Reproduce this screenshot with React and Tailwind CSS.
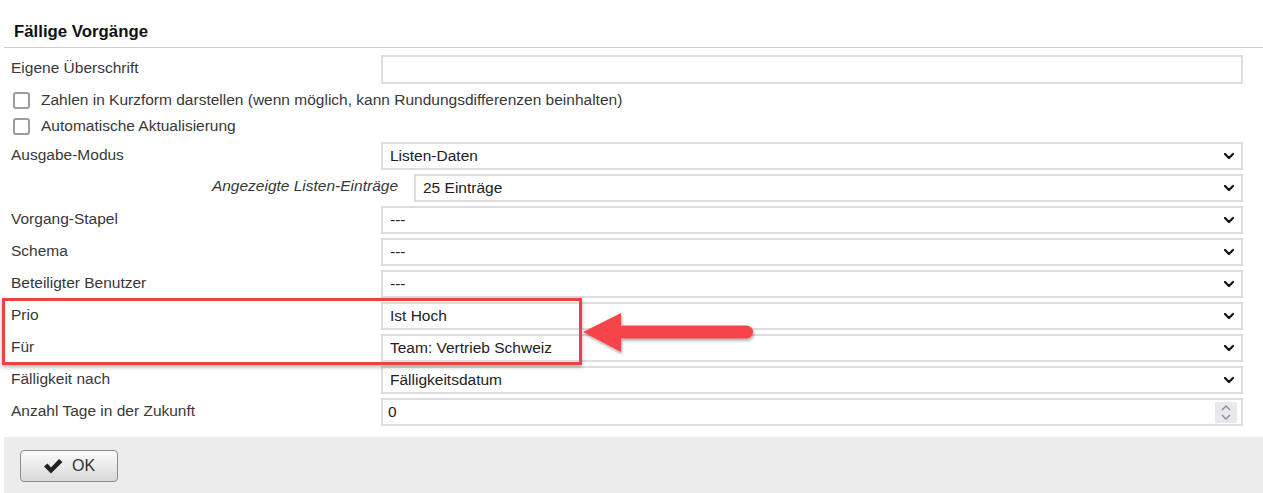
import React from "react";

const font = { fontFamily: '"Liberation Sans", Arial, sans-serif' };

function Chevron() {
  return (
    <svg width="12" height="8" viewBox="0 0 12 8" className="shrink-0">
      <polyline points="2,2 6,6 10,2" fill="none" stroke="#111" strokeWidth="2.2" strokeLinecap="round" strokeLinejoin="round" />
    </svg>
  );
}

function Select({ value }) {
  return (
    <div className="flex-1 h-[28px] border-2 border-[#dedede] bg-white flex items-center justify-between pl-[7px] pr-[6px] text-[15.5px] text-[#222]">
      <span>{value}</span>
      <Chevron />
    </div>
  );
}

function Row({ label, children }) {
  return (
    <div className="flex items-center h-[28px] mt-[4px]">
      <div className="w-[377px] shrink-0 pl-[7px] text-[15.5px] text-[#383838] -mt-[2px]">{label}</div>
      {children}
    </div>
  );
}

function Checkbox({ label }) {
  return (
    <div className="flex items-center h-[26px] pl-[9px]">
      <div className="w-[17px] h-[17px] border-2 border-[#9b9ba3] rounded-[3px] bg-white" />
      <span className="ml-[11px] text-[15.5px] text-[#383838]">{label}</span>
    </div>
  );
}

export default function App() {
  return (
    <div className="relative w-[1263px] h-[493px] bg-white overflow-hidden pl-[4px]" style={font}>
      <div className="h-[48px] flex items-end pb-[5px] border-b border-[#cfcfcf]">
        <span className="pl-[10px] text-[16.8px] leading-[20px] font-bold text-[#111]">Fällige Vorgänge</span>
      </div>

      <div className="pr-[20px]">
        <div className="flex items-center h-[29px] mt-[7px]">
          <div className="w-[377px] shrink-0 pl-[7px] text-[15.5px] text-[#383838] -mt-[3px]">Eigene Überschrift</div>
          <div className="flex-1 h-[29px] border-2 border-[#dedede] bg-white" />
        </div>

        <div className="mt-[3px]">
          <Checkbox label="Zahlen in Kurzform darstellen (wenn möglich, kann Rundungsdifferenzen beinhalten)" />
          <Checkbox label="Automatische Aktualisierung" />
        </div>

        <div className="flex items-center h-[28px] mt-[3px]">
          <div className="w-[377px] shrink-0 pl-[7px] text-[15.5px] text-[#383838] -mt-[2px]">Ausgabe-Modus</div>
          <Select value="Listen-Daten" />
        </div>

        <div className="flex items-center h-[28px] mt-[4px]">
          <div className="w-[410px] shrink-0 pr-[16px] text-right text-[15.5px] italic text-[#383838] -mt-[4px]">Angezeigte Listen-Einträge</div>
          <Select value="25 Einträge" />
        </div>

        <Row label="Vorgang-Stapel"><Select value="---" /></Row>
        <Row label="Schema"><Select value="---" /></Row>
        <Row label="Beteiligter Benutzer"><Select value="---" /></Row>
        <Row label="Prio"><Select value="Ist Hoch" /></Row>
        <Row label="Für"><Select value="Team: Vertrieb Schweiz" /></Row>
        <Row label="Fälligkeit nach"><Select value="Fälligkeitsdatum" /></Row>
        <Row label="Anzahl Tage in der Zukunft">
          <div className="flex-1 h-[28px] border-2 border-[#dedede] bg-white flex items-center justify-between pl-[5px] pr-[4px] text-[15.5px] text-[#222]">
            <span>0</span>
            <div className="w-[22px] h-[21px] bg-[#e9e9ed] flex flex-col items-center justify-center gap-[3px]">
              <svg width="10" height="6" viewBox="0 0 10 6"><polyline points="1,5 5,1 9,5" fill="none" stroke="#8a8a92" strokeWidth="1.4" /></svg>
              <svg width="10" height="6" viewBox="0 0 10 6"><polyline points="1,1 5,5 9,1" fill="none" stroke="#8a8a92" strokeWidth="1.4" /></svg>
            </div>
          </div>
        </Row>
      </div>

      <div className="mt-[11px] h-[56px] bg-[#ececec] pt-[13px] pl-[16px]">
        <button className="w-[98px] h-[32px] rounded-[4px] border border-[#8c8c8c] bg-gradient-to-b from-[#fbfbfb] to-[#d9d9d9] flex items-center justify-center gap-[9px] text-[16px] text-[#333]" style={font}>
          <svg width="20" height="16" viewBox="0 0 20 16">
            <path d="M1 8.5 L4.5 5.5 L8 9.5 L16 1 L19.5 4 L8 15.5 Z" fill="#222" />
          </svg>
          <span>OK</span>
        </button>
      </div>

      {/* Annotation overlay */}
      <div className="absolute left-[2px] top-[298px] w-[580px] h-[67px] border-[3px] border-[#ef4047] shadow-[0_2px_4px_rgba(0,0,0,0.3)]" />
      <svg className="absolute left-[575px] top-[305px]" width="190" height="56" viewBox="575 305 190 56">
        <defs>
          <filter id="sh" x="-10%" y="-20%" width="130%" height="160%">
            <feDropShadow dx="1" dy="2" stdDeviation="1.5" floodColor="#000" floodOpacity="0.35" />
          </filter>
        </defs>
        <g filter="url(#sh)" fill="#f5444b">
          <polygon points="583,332 621,313 621,352" />
          <rect x="617" y="325.5" width="136" height="13" rx="6.5" />
        </g>
      </svg>
    </div>
  );
}
